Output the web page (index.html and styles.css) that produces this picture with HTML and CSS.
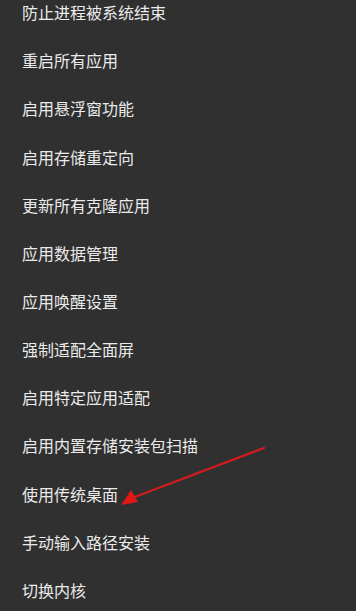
FILE: index.html
```html
<!DOCTYPE html>
<html lang="zh-CN">
<head>
<meta charset="utf-8">
<link rel="stylesheet" href="styles.css">
</head>
<body>
<div class="screen">
  <ul class="menu">
    <li class="item">防止进程被系统结束</li>
    <li class="item">重启所有应用</li>
    <li class="item">启用悬浮窗功能</li>
    <li class="item">启用存储重定向</li>
    <li class="item">更新所有克隆应用</li>
    <li class="item">应用数据管理</li>
    <li class="item">应用唤醒设置</li>
    <li class="item">强制适配全面屏</li>
    <li class="item">启用特定应用适配</li>
    <li class="item">启用内置存储安装包扫描</li>
    <li class="item">使用传统桌面</li>
    <li class="item">手动输入路径安装</li>
    <li class="item">切换内核</li>
  </ul>
  <svg class="arrow" width="356" height="611" viewBox="0 0 356 611">
    <line x1="264" y1="448" x2="132" y2="498" stroke="#d01c1c" stroke-width="2.2" stroke-linecap="round"/>
    <polygon points="121,505 131,490 138,502" fill="#e01818"/>
  </svg>
</div>
</body>
</html>
```
FILE: styles.css
```css
html, body {
  margin: 0;
  padding: 0;
  background: #303030;
}
.screen {
  position: relative;
  width: 356px;
  height: 611px;
  overflow: hidden;
  background: #303030;
}
.menu {
  list-style: none;
  margin: -12px 0 0 0;
  padding: 0;
}
.item {
  height: 48.17px;
  display: flex;
  align-items: center;
  padding-left: 22px;
  font-family: "Noto Sans CJK SC", "Noto Sans", sans-serif;
  font-size: 16px;
  color: #ebebeb;
}
.arrow {
  position: absolute;
  left: 0;
  top: 0;
  pointer-events: none;
}
```
